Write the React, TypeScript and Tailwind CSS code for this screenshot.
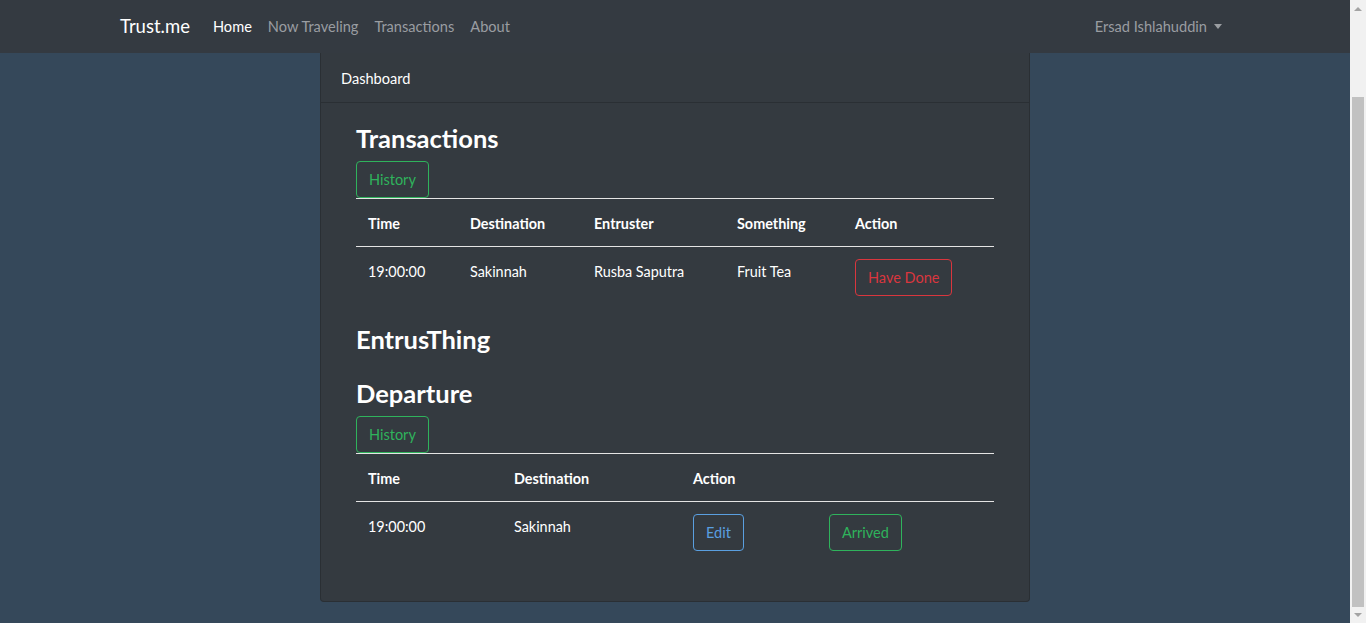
import React from "react";

const font = { fontFamily: "Lato, 'Noto Sans', sans-serif" };

function OutlineBtn({ children, color }: { children: React.ReactNode; color: "green" | "red" | "blue" }) {
  const cls =
    color === "green"
      ? "border-[#2fb35c] text-[#2fb35c]"
      : color === "red"
      ? "border-[#d9363e] text-[#d9363e]"
      : "border-[#5a9fe0] text-[#5a9fe0]";
  return (
    <button className={`h-[37px] px-3 rounded-[4px] border text-[14.5px] leading-[22px] bg-transparent ${cls}`}>
      {children}
    </button>
  );
}

function Th({ children, w }: { children?: React.ReactNode; w: string }) {
  return <th className={`${w} text-left font-bold px-3 h-[48px] pt-[2px] align-middle text-[14.4px] text-white`}>{children}</th>;
}

const td = "px-3 pt-[13px] pb-3 align-top leading-[24px]";
const tdBtn = "px-3 pt-[12px] pb-3 align-top";

export default function App() {
  return (
    <div className="flex h-[623px] w-[1366px] overflow-hidden" style={font}>
      <div className="flex-1 flex flex-col bg-[#35485a]">
        {/* Navbar */}
        <nav className="h-[53px] shrink-0 bg-[#343a41] flex items-center">
          <div className="w-[1110px] mx-auto flex items-center">
            <span className="text-white text-[18.5px] mr-[23px] leading-none pb-[1px]">Trust.me</span>
            <div className="flex items-center text-[14.6px] gap-[16px]">
              <a className="text-white">Home</a>
              <a className="text-[#9a9da1]">Now Traveling</a>
              <a className="text-[#9a9da1]">Transactions</a>
              <a className="text-[#9a9da1]">About</a>
            </div>
            <div className="ml-auto flex items-center text-[14.6px] text-[#9a9da1] pr-2">
              <span>Ersad Ishlahuddin</span>
              <span className="ml-[7px] w-0 h-0 border-l-[4.5px] border-r-[4.5px] border-t-[5px] border-l-transparent border-r-transparent border-t-[#9a9da1]" />
            </div>
          </div>
        </nav>

        {/* Card */}
        <div className="w-[710px] mx-auto bg-[#343a40] border border-t-0 border-[#2a2f34] rounded-b-[4px] text-white">
          <div className="h-[50px] flex items-center px-5 pt-[3px] border-b border-[#2a2f34] text-[14.6px]">Dashboard</div>
          <div className="px-[35px] pt-[20px] pb-[22px]">
            <h3 className="text-[25.5px] font-bold leading-[31px]">Transactions</h3>
            <div className="mt-[7px]">
              <OutlineBtn color="green">History</OutlineBtn>
            </div>
            <table className="w-[638px] mb-[16px] border-collapse text-[14.4px]">
              <thead>
                <tr className="border-t border-b border-[#e4e4e4]">
                  <Th w="w-[102px]">Time</Th>
                  <Th w="w-[124px]">Destination</Th>
                  <Th w="w-[143px]">Entruster</Th>
                  <Th w="w-[118px]">Something</Th>
                  <Th w="w-[151px]">Action</Th>
                </tr>
              </thead>
              <tbody>
                <tr>
                  <td className={td}>19:00:00</td>
                  <td className={td}>Sakinnah</td>
                  <td className={td}>Rusba Saputra</td>
                  <td className={td}>Fruit Tea</td>
                  <td className={tdBtn}>
                    <OutlineBtn color="red">Have Done</OutlineBtn>
                  </td>
                </tr>
              </tbody>
            </table>

            <h3 className="text-[25.5px] font-bold leading-[31px] mb-[23px]">EntrusThing</h3>

            <h3 className="text-[25.5px] font-bold leading-[31px]">Departure</h3>
            <div className="mt-[7px]">
              <OutlineBtn color="green">History</OutlineBtn>
            </div>
            <table className="w-[638px] mb-[16px] border-collapse text-[14.4px]">
              <thead>
                <tr className="border-t border-b border-[#e4e4e4]">
                  <Th w="w-[146px]">Time</Th>
                  <Th w="w-[179px]">Destination</Th>
                  <Th w="w-[136px]">Action</Th>
                  <Th w="w-[177px]" />
                </tr>
              </thead>
              <tbody>
                <tr>
                  <td className={td}>19:00:00</td>
                  <td className={td}>Sakinnah</td>
                  <td className={tdBtn}>
                    <OutlineBtn color="blue">Edit</OutlineBtn>
                  </td>
                  <td className={tdBtn}>
                    <OutlineBtn color="green">Arrived</OutlineBtn>
                  </td>
                </tr>
              </tbody>
            </table>
          </div>
        </div>
      </div>

      {/* Scrollbar */}
      <div className="w-[16px] shrink-0 bg-[#f1f1f1] flex flex-col items-center">
        <div className="h-[17px] flex items-center justify-center">
          <span className="w-0 h-0 border-l-[4px] border-r-[4px] border-b-[4px] border-l-transparent border-r-transparent border-b-[#a3a3a3]" />
        </div>
        <div className="flex-1 w-full flex flex-col px-[2px]">
          <div className="h-[80px]" />
          <div className="flex-1 bg-[#c1c1c1]" />
        </div>
        <div className="h-[16px] flex items-center justify-center">
          <span className="w-0 h-0 border-l-[4px] border-r-[4px] border-t-[4px] border-l-transparent border-r-transparent border-t-[#a3a3a3]" />
        </div>
      </div>
    </div>
  );
}
